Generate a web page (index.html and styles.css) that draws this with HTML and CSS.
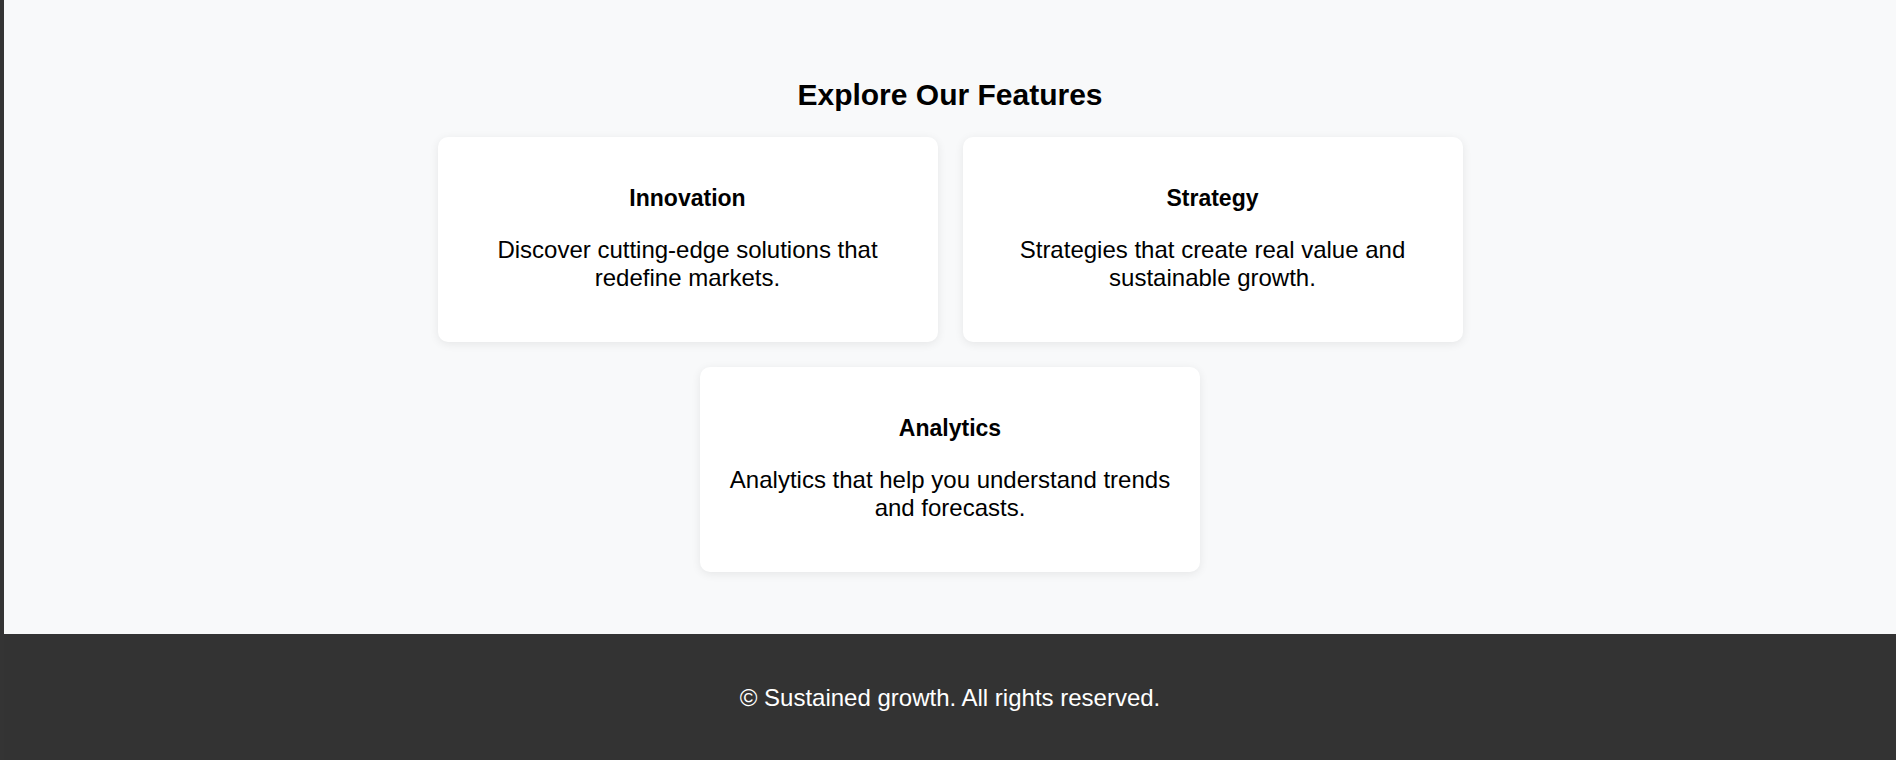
FILE: index.html
```html
<!DOCTYPE html>
<html lang="en">
<head>
<meta charset="utf-8">
<title>Explore Our Features</title>
<link rel="stylesheet" href="styles.css">
</head>
<body>
<main class="features">
  <h2 class="features-title">Explore Our Features</h2>
  <div class="card-grid">
    <div class="card">
      <h3 class="card-title">Innovation</h3>
      <p class="card-text">Discover cutting-edge solutions that redefine markets.</p>
    </div>
    <div class="card">
      <h3 class="card-title">Strategy</h3>
      <p class="card-text">Strategies that create real value and sustainable growth.</p>
    </div>
    <div class="card">
      <h3 class="card-title">Analytics</h3>
      <p class="card-text">Analytics that help you understand trends and forecasts.</p>
    </div>
  </div>
</main>
<footer class="site-footer">
  <p class="footer-text">© Sustained growth. All rights reserved.</p>
</footer>
</body>
</html>
```

FILE: styles.css
```css
html, body {
  margin: 0;
  padding: 0;
}

body {
  font-family: "Liberation Sans", Arial, sans-serif;
  font-size: 24px;
  color: #000;
  background: #333333;
  border-left: 4px solid #343434;
  min-height: 760px;
}

.features {
  background: #f8f9fa;
  padding: 53px 24px 62px;
  text-align: center;
}

.features-title {
  font-size: 30px;
  font-weight: bold;
  margin: 25px 0 25px;
}

.card-grid {
  display: flex;
  flex-wrap: wrap;
  justify-content: center;
  gap: 25px;
  max-width: 1030px;
  margin: 0 auto;
}

.card {
  flex: 0 0 500px;
  box-sizing: border-box;
  background: #ffffff;
  border-radius: 10px;
  box-shadow: 0 2px 10px rgba(0, 0, 0, 0.08);
  padding: 24px;
}

.card-title {
  font-size: 23px;
  font-weight: bold;
  margin: 24px 0 23px;
}

.card-text {
  margin: 24px 0 26px;
  line-height: normal;
}

.site-footer {
  background: #333333;
  color: #ffffff;
  text-align: center;
  padding: 50px 24px 48px;
}

.footer-text {
  margin: 0;
}
```
